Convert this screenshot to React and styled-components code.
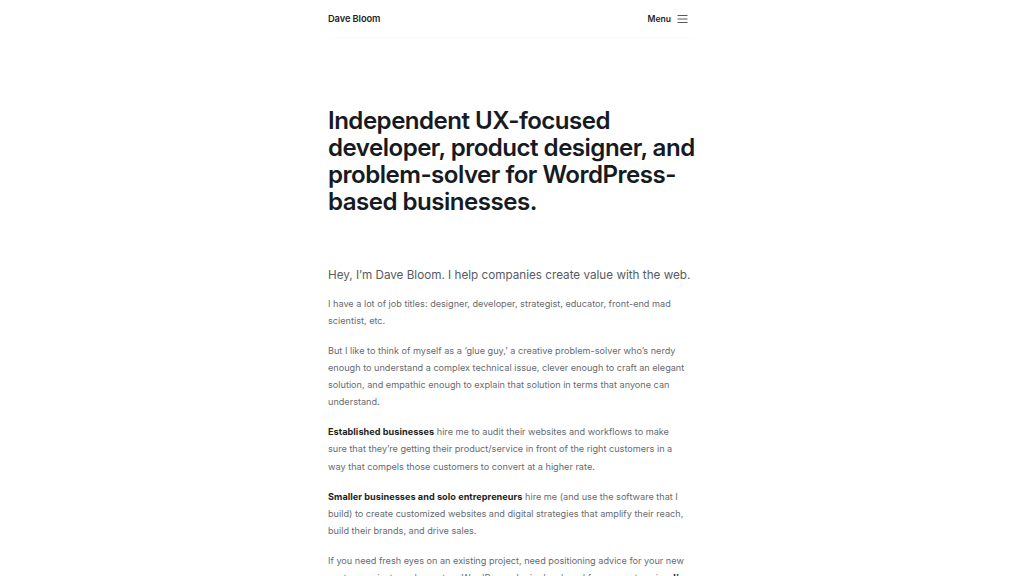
import React from "react";
import styled, { createGlobalStyle } from "styled-components";

const GlobalStyle = createGlobalStyle`
  html, body {
    margin: 0;
    padding: 0;
    background: #fff;
  }
  body {
    font-family: Inter, "Noto Sans", sans-serif;
    color: #1d1f24;
    -webkit-font-smoothing: antialiased;
  }
`;

const Page = styled.div`
  width: 368px;
  margin: 0 auto;
`;

const Header = styled.header`
  display: flex;
  align-items: center;
  justify-content: space-between;
  height: 37px;
  box-shadow: 0 3px 4px -3px rgba(0, 0, 0, 0.035);
`;

const Brand = styled.a`
  font-size: 9.3px;
  font-weight: 600;
  color: #1d1f24;
  letter-spacing: -0.1px;
`;

const MenuButton = styled.button`
  display: flex;
  align-items: center;
  gap: 6px;
  border: 0;
  background: none;
  padding: 0;
  margin-right: 8px;
  font-family: inherit;
  font-size: 8.6px;
  font-weight: 600;
  color: #1d1f24;
`;

const Hero = styled.h1`
  margin: 70px -8px 0 0;
  font-size: 24.1px;
  line-height: 27px;
  font-weight: 600;
  letter-spacing: -0.52px;
  color: #161a22;
`;

const Intro = styled.section`
  margin-top: 51px;
`;

const Lead = styled.p`
  margin: 0 0 11px;
  font-size: 11.7px;
  line-height: 18px;
  color: #575b62;
`;

const Para = styled.p`
  max-width: 361px;
  margin: 0 0 12.9px;
  font-size: 9.15px;
  line-height: 17.1px;
  color: #676b71;

  b {
    font-weight: 700;
    letter-spacing: 0.05px;
    color: #1d1f24;
  }
`;

function MenuIcon() {
  return (
    <svg width="11" height="10" viewBox="0 0 11 10" fill="none">
      <path d="M0.5 1.5h10M0.5 5h10M0.5 8.5h10" stroke="#55595f" strokeWidth="1" />
    </svg>
  );
}

export default function App() {
  return (
    <>
      <GlobalStyle />
      <Page>
        <Header>
          <Brand>Dave Bloom</Brand>
          <MenuButton>
            Menu
            <MenuIcon />
          </MenuButton>
        </Header>
        <Hero>
          Independent UX-focused developer, product designer, and
          problem-solver for WordPress-based businesses.
        </Hero>
        <Intro>
          <Lead>Hey, I’m Dave Bloom. I help companies create value with the web.</Lead>
          <Para>
            I have a lot of job titles: designer, developer, strategist,
            educator, front-end mad scientist, etc.
          </Para>
          <Para>
            But I like to think of myself as a ‘glue guy,’ a creative
            problem-solver who’s nerdy enough to understand a complex technical
            issue, clever enough to craft an elegant solution, and empathic
            enough to explain that solution in terms that anyone can understand.
          </Para>
          <Para>
            <b>Established businesses</b> hire me to audit their websites and
            workflows to make sure that they’re getting their product/service in
            front of the right customers in a way that compels those customers to
            convert at a higher rate.
          </Para>
          <Para>
            <b>Smaller businesses and solo entrepreneurs</b> hire me (and use the
            software that I build) to create customized websites and digital
            strategies that amplify their reach, build their brands, and drive
            sales.
          </Para>
          <Para>
            If you need fresh eyes on an existing project, need positioning
            advice for your new venture, or just need a custom WordPress plugin
            developed for your enterprise, <b>I’m here to help.</b>
          </Para>
        </Intro>
      </Page>
    </>
  );
}
